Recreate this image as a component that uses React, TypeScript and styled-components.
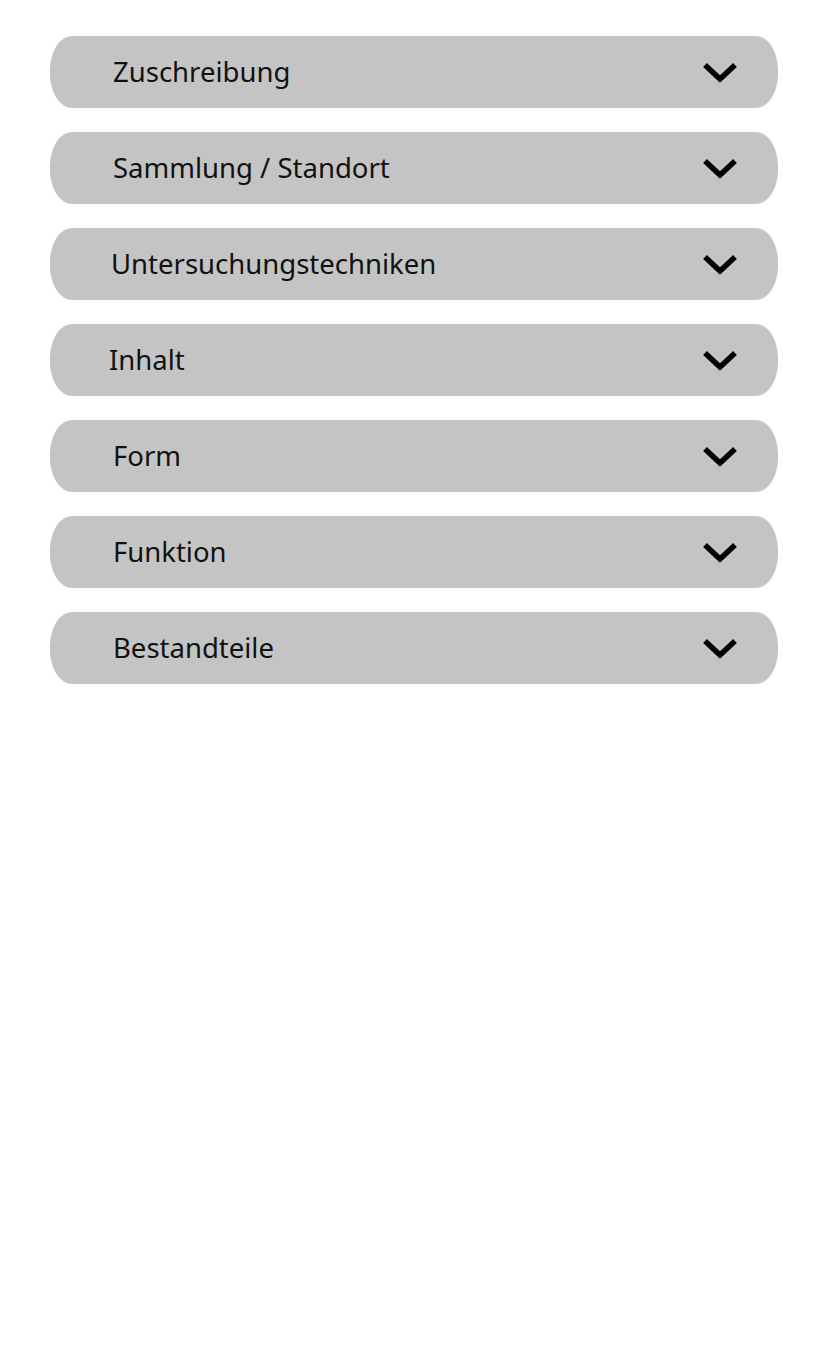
import * as React from "react";
import styled, { createGlobalStyle } from "styled-components";

const GlobalStyle = createGlobalStyle`
  html, body {
    margin: 0;
    padding: 0;
    background: #ffffff;
  }
  body {
    font-family: "Noto Sans", "Open Sans", sans-serif;
  }
`;

const Page = styled.div`
  padding: 36px 50px;
`;

const SectionList = styled.ul`
  list-style: none;
  margin: 0;
  padding: 0;
  display: flex;
  flex-direction: column;
  gap: 24px;
`;

const SectionItem = styled.li`
  height: 72px;
  border-radius: 22px / 34px;
  background: #c4c4c4;
  display: flex;
  align-items: center;
  justify-content: space-between;
  padding: 0 40px 0 0;
  cursor: pointer;
`;

const SectionTitle = styled.span<{ $indent: number }>`
  padding-left: ${p => p.$indent}px;
  padding-bottom: 1px;
  font-size: 27.5px;
  line-height: 1;
  color: #111111;
`;

const Chevron = () => (
  <svg width="36" height="22" viewBox="0 0 36 22" aria-hidden="true">
    <polyline
      points="3,4 18,18 33,4"
      fill="none"
      stroke="#000"
      strokeWidth="5.5"
      strokeLinejoin="miter"
    />
  </svg>
);

const sections = [
  { title: "Zuschreibung", indent: 63 },
  { title: "Sammlung / Standort", indent: 63 },
  { title: "Untersuchungstechniken", indent: 61 },
  { title: "Inhalt", indent: 59 },
  { title: "Form", indent: 63 },
  { title: "Funktion", indent: 63 },
  { title: "Bestandteile", indent: 63 }
];

export default function App() {
  return (
    <Page>
      <GlobalStyle />
      <SectionList>
        {sections.map(s => (
          <SectionItem key={s.title}>
            <SectionTitle $indent={s.indent}>{s.title}</SectionTitle>
            <Chevron />
          </SectionItem>
        ))}
      </SectionList>
    </Page>
  );
}
